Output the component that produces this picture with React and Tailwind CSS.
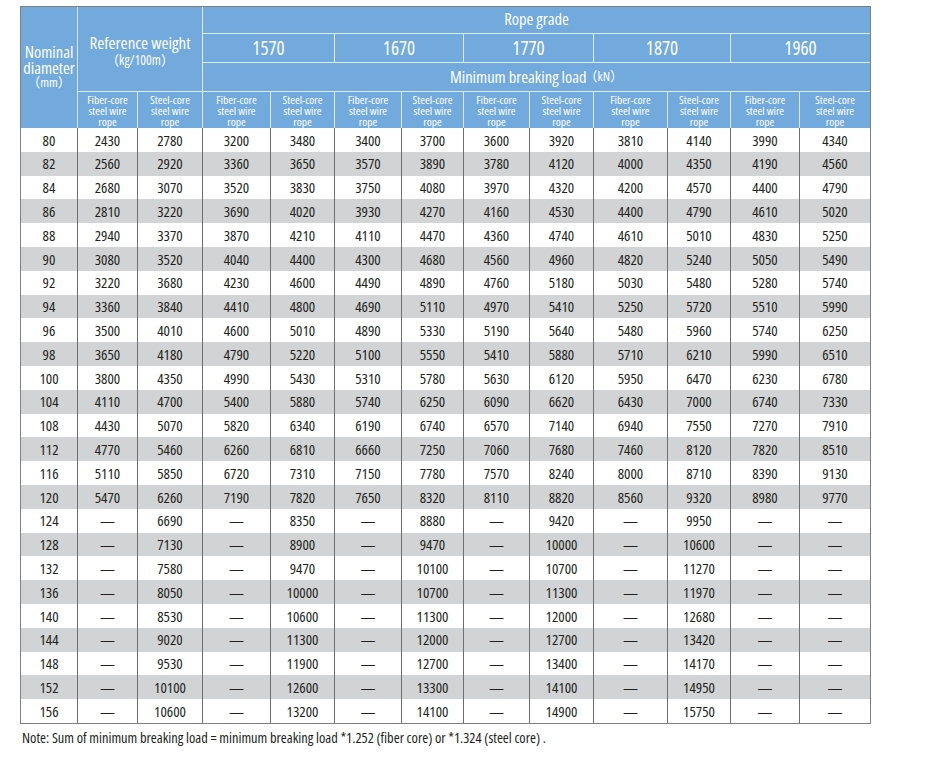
const grades = ['1570', '1670', '1770', '1870', '1960'];

const rows = [
  ['80', '2430', '2780', '3200', '3480', '3400', '3700', '3600', '3920', '3810', '4140', '3990', '4340'],
  ['82', '2560', '2920', '3360', '3650', '3570', '3890', '3780', '4120', '4000', '4350', '4190', '4560'],
  ['84', '2680', '3070', '3520', '3830', '3750', '4080', '3970', '4320', '4200', '4570', '4400', '4790'],
  ['86', '2810', '3220', '3690', '4020', '3930', '4270', '4160', '4530', '4400', '4790', '4610', '5020'],
  ['88', '2940', '3370', '3870', '4210', '4110', '4470', '4360', '4740', '4610', '5010', '4830', '5250'],
  ['90', '3080', '3520', '4040', '4400', '4300', '4680', '4560', '4960', '4820', '5240', '5050', '5490'],
  ['92', '3220', '3680', '4230', '4600', '4490', '4890', '4760', '5180', '5030', '5480', '5280', '5740'],
  ['94', '3360', '3840', '4410', '4800', '4690', '5110', '4970', '5410', '5250', '5720', '5510', '5990'],
  ['96', '3500', '4010', '4600', '5010', '4890', '5330', '5190', '5640', '5480', '5960', '5740', '6250'],
  ['98', '3650', '4180', '4790', '5220', '5100', '5550', '5410', '5880', '5710', '6210', '5990', '6510'],
  ['100', '3800', '4350', '4990', '5430', '5310', '5780', '5630', '6120', '5950', '6470', '6230', '6780'],
  ['104', '4110', '4700', '5400', '5880', '5740', '6250', '6090', '6620', '6430', '7000', '6740', '7330'],
  ['108', '4430', '5070', '5820', '6340', '6190', '6740', '6570', '7140', '6940', '7550', '7270', '7910'],
  ['112', '4770', '5460', '6260', '6810', '6660', '7250', '7060', '7680', '7460', '8120', '7820', '8510'],
  ['116', '5110', '5850', '6720', '7310', '7150', '7780', '7570', '8240', '8000', '8710', '8390', '9130'],
  ['120', '5470', '6260', '7190', '7820', '7650', '8320', '8110', '8820', '8560', '9320', '8980', '9770'],
  ['124', '—', '6690', '—', '8350', '—', '8880', '—', '9420', '—', '9950', '—', '—'],
  ['128', '—', '7130', '—', '8900', '—', '9470', '—', '10000', '—', '10600', '—', '—'],
  ['132', '—', '7580', '—', '9470', '—', '10100', '—', '10700', '—', '11270', '—', '—'],
  ['136', '—', '8050', '—', '10000', '—', '10700', '—', '11300', '—', '11970', '—', '—'],
  ['140', '—', '8530', '—', '10600', '—', '11300', '—', '12000', '—', '12680', '—', '—'],
  ['144', '—', '9020', '—', '11300', '—', '12000', '—', '12700', '—', '13420', '—', '—'],
  ['148', '—', '9530', '—', '11900', '—', '12700', '—', '13400', '—', '14170', '—', '—'],
  ['152', '—', '10100', '—', '12600', '—', '13300', '—', '14100', '—', '14950', '—', '—'],
  ['156', '—', '10600', '—', '13200', '—', '14100', '—', '14900', '—', '15750', '—', '—'],
];

const SubHead = ({ label, last }) => (
  <div
    className={`flex h-full flex-col items-center justify-center text-[11.5px] leading-[11px] text-white ${
      last ? '' : 'border-r border-[#dcebf8]'
    }`}
  >
    <span>{label}</span>
    <span>steel wire</span>
    <span>rope</span>
  </div>
);

export default function App() {
  return (
    <div className="min-h-[761px] w-[926px] bg-white pt-[6px] font-['Open_Sans','Noto_Sans_CJK_SC',sans-serif] font-stretch-condensed text-[#231f20]">
      <div className="ml-[20px] w-[851px] border border-[#7f8083]">
        <div className="grid grid-cols-[57px_60px_65px_68px_64px_67px_62px_66px_64px_74px_63px_69px_70px] grid-rows-[27px_29px_29px_36px] auto-rows-[23.8px]">
          {/* Header */}
          <div className="row-span-4 flex flex-col items-center justify-center border-r border-[#dcebf8] bg-[#72aadd] text-[16.5px] leading-[15.5px] text-white">
            <span>Nominal</span>
            <span>diameter</span>
            <span className="text-[13px]">（mm）</span>
          </div>
          <div className="col-span-2 row-span-3 flex flex-col items-center justify-center border-b border-r border-[#dcebf8] bg-[#72aadd] pt-[4px] text-white">
            <span className="text-[17px] leading-[18px]">Reference weight</span>
            <span className="text-[13.5px] leading-[17px]">（kg/100m）</span>
          </div>
          <div className="col-span-10 flex items-center justify-center border-b border-[#dcebf8] bg-[#72aadd] pb-[2px] text-[16.5px] text-white">
            Rope grade
          </div>
          {grades.map((g, i) => (
            <div
              key={g}
              className={`col-span-2 flex items-center justify-center border-b border-[#dcebf8] bg-[#72aadd] text-[19px] text-white ${
                i < grades.length - 1 ? 'border-r' : ''
              }`}
            >
              {g}
            </div>
          ))}
          <div className="col-span-10 flex items-center justify-center border-b border-[#dcebf8] bg-[#72aadd] text-[16.5px] text-white">
            Minimum breaking load<span className="-ml-[2px] text-[13px]">（kN）</span>
          </div>
          {Array.from({ length: 12 }).map((_, i) => (
            <div key={i} className="bg-[#72aadd]">
              <SubHead label={i % 2 === 0 ? 'Fiber-core' : 'Steel-core'} last={i === 11} />
            </div>
          ))}

          {/* Data */}
          {rows.map((row, r) =>
            row.map((cell, c) => (
              <div
                key={`${r}-${c}`}
                className={`flex items-center justify-center text-[15px] ${
                  r % 2 === 1 ? 'bg-[#d1d3d4]' : 'bg-white'
                } ${c < 12 ? 'border-r border-[#6d6e71]' : ''}`}
              >
                {cell}
              </div>
            ))
          )}
        </div>
      </div>
      <p className="ml-[22px] mt-[5px] text-[14.4px] leading-[18px] text-[#231f20]">
        Note: Sum of minimum breaking load = minimum breaking load *1.252 (fiber core) or *1.324 (steel core) .
      </p>
    </div>
  );
}
